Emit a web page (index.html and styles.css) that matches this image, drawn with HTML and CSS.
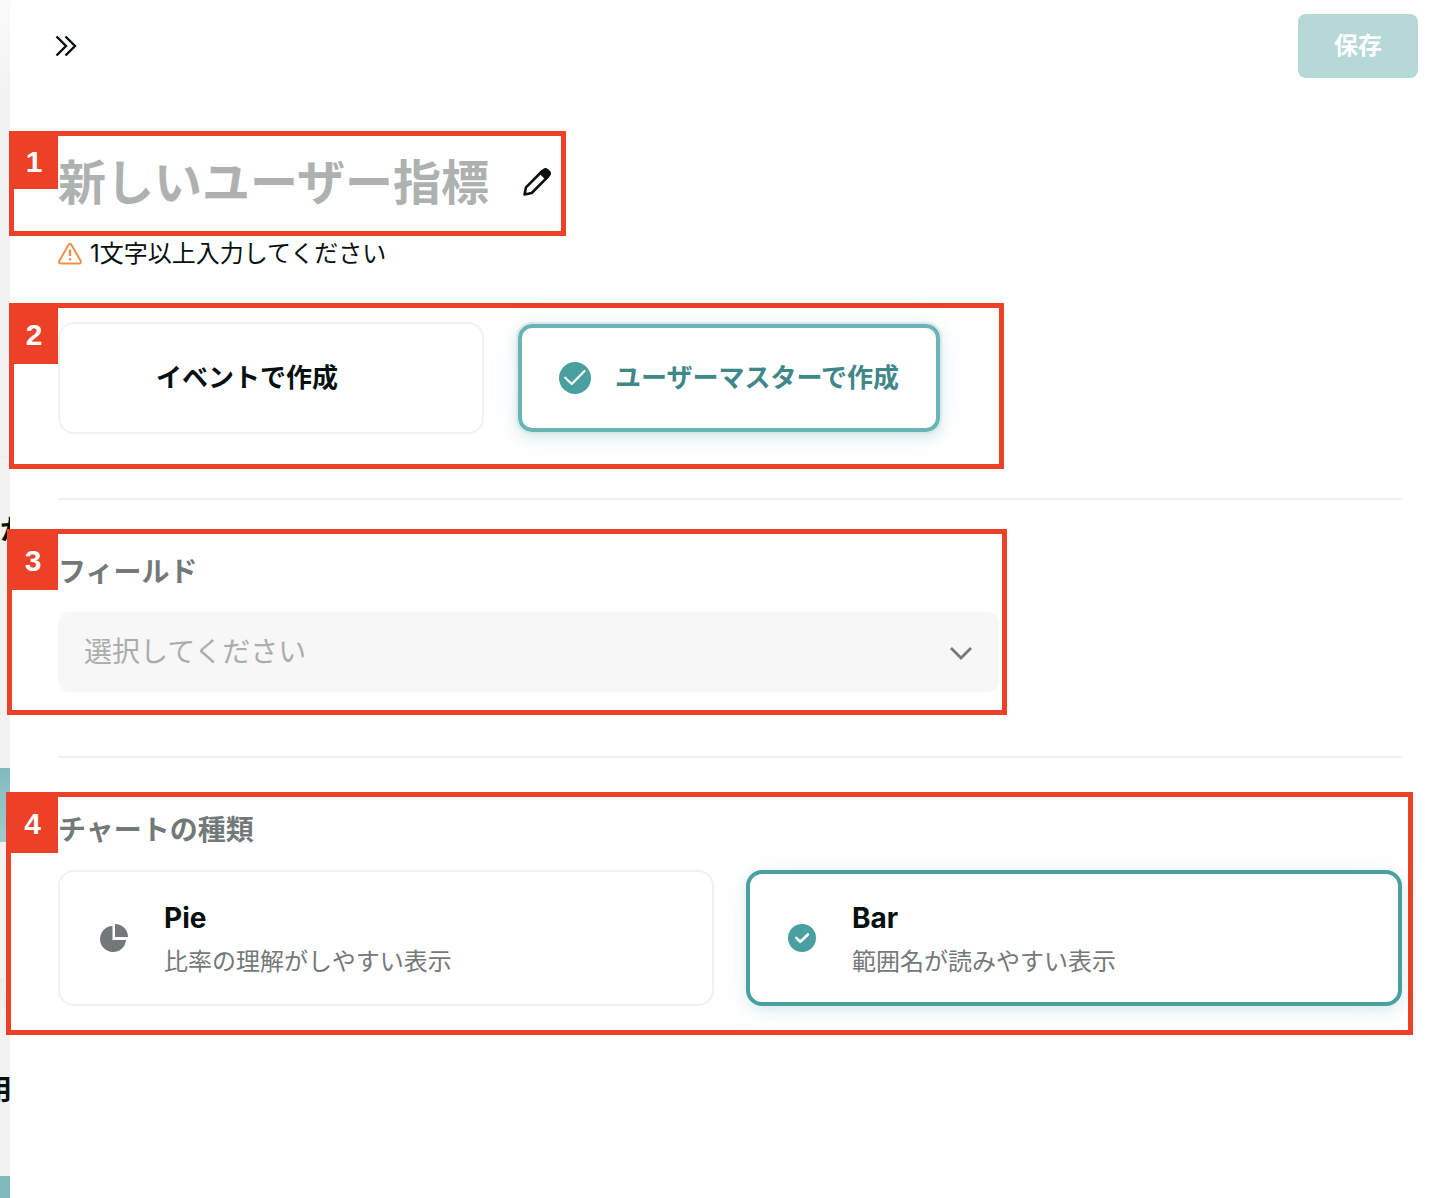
FILE: index.html
```html
<!DOCTYPE html>
<html lang="ja">
<head>
<meta charset="utf-8">
<meta name="viewport" content="width=device-width, initial-scale=1">
<title>新しいユーザー指標</title>
<link rel="stylesheet" href="styles.css">
</head>
<body>
<div class="page">
  <aside class="backdrop" aria-hidden="true">
    <div class="backdrop-top"></div>
    <div class="backdrop-heading">か</div>
    <div class="backdrop-chart"></div>
    <div class="backdrop-gap"></div>
    <div class="backdrop-band"></div>
    <div class="backdrop-heading backdrop-heading-end">用</div>
    <div class="backdrop-chart backdrop-chart-last"></div>
  </aside>

  <main class="drawer">
    <header class="drawer-header">
      <button class="icon-button" type="button" aria-label="閉じる">
        <svg width="24" height="24" viewBox="0 0 24 24" fill="none" stroke="currentColor" stroke-width="2.400"><path d="M2.500 2.500 12 12l-9.500 9.500M11.500 2.500 21 12l-9.500 9.500"/></svg>
      </button>
      <button class="save-button" type="button" disabled>保存</button>
    </header>

    <form class="drawer-body">
      <div class="annotated title-row">
        <input class="title-input" type="text" aria-label="指標名" placeholder="新しいユーザー指標">
        <button class="icon-button" type="button" aria-label="名前を編集">
          <svg width="28" height="28" viewBox="0 0 28 28"><path d="M1.500 26.500 3 19.300 18.800 3.500l5.700 5.700L8.700 25Z" fill="none" stroke="currentColor" stroke-width="2.600" stroke-linejoin="round"/><path d="m15.800 5 4-3.800a4 4 0 0 1 5.400 0l1.600 1.600a4 4 0 0 1 0 5.400L23 12.200Z" fill="currentColor"/></svg>
        </button>
        <div class="note note-title"><span class="note-number">1</span></div>
      </div>

      <p class="warning">
        <svg width="24" height="24" viewBox="0 0 24 24" fill="none" stroke="currentColor" stroke-width="2" stroke-linejoin="round"><path d="M10.700 2.500a1.500 1.500 0 0 1 2.600 0l9.400 16.600a1.500 1.500 0 0 1-1.300 2.300H2.600a1.500 1.500 0 0 1-1.300-2.300Z"/><path d="M12 7.500v6.500M12 16.200v2.400" stroke-width="2.400"/></svg>
        <span>1文字以上入力してください</span>
      </p>

      <div class="annotated method-group" role="radiogroup" aria-label="作成方法">
        <label class="card method">
          <input class="card-radio" type="radio" name="method" value="event">
          <span class="method-text">イベントで作成</span>
        </label>
        <label class="card method method-selected">
          <input class="card-radio" type="radio" name="method" value="master" checked>
          <svg width="32" height="32" viewBox="0 0 32 32"><circle cx="16" cy="16" r="16" fill="#4a9fa1"/><path d="m6.200 15.700 6.600 6.300L25.500 9" fill="none" stroke="#fff" stroke-width="2.200" stroke-linecap="round" stroke-linejoin="round"/></svg>
          <span>ユーザーマスターで作成</span>
        </label>
        <div class="note note-method"><span class="note-number">2</span></div>
      </div>

      <hr class="divider">

      <div class="annotated field">
        <label class="section-label" for="field">フィールド</label>
        <div class="select-box">
          <select class="select" id="field">
            <option>選択してください</option>
          </select>
          <svg class="select-arrow" width="24" height="24" viewBox="0 0 24 24" fill="none" stroke="currentColor" stroke-width="2.800"><path d="m2 8 10 10L22 8"/></svg>
        </div>
        <div class="note note-field"><span class="note-number">3</span></div>
      </div>

      <hr class="divider">

      <div class="annotated" role="radiogroup" aria-labelledby="chart-label">
        <div class="section-label" id="chart-label">チャートの種類</div>
        <div class="chart-group">
          <label class="card chart">
            <input class="card-radio" type="radio" name="chart" value="pie">
            <svg width="28" height="28" viewBox="0 0 28 28" fill="#737978"><path d="M12.500 2A13 13 0 1 0 26 16H12.500Z"/><path d="M15 0a13 13 0 0 1 13 13H15Z"/></svg>
            <span class="chart-text"><strong class="chart-name">Pie</strong><span class="chart-note">比率の理解がしやすい表示</span></span>
          </label>
          <label class="card chart chart-selected">
            <input class="card-radio" type="radio" name="chart" value="bar" checked>
            <svg width="28" height="28" viewBox="0 0 28 28"><circle cx="14" cy="14" r="14" fill="#4a9fa1"/><path d="m8.300 13.900 4 3.900 7.600-7.300" fill="none" stroke="#fff" stroke-width="2.600" stroke-linecap="round" stroke-linejoin="round"/></svg>
            <span class="chart-text"><strong class="chart-name">Bar</strong><span class="chart-note">範囲名が読みやすい表示</span></span>
          </label>
        </div>
        <div class="note note-chart"><span class="note-number">4</span></div>
      </div>
    </form>
  </main>
</div>
</body>
</html>
```

FILE: styles.css
```css
:root {
  --ink: #05100f;
  --muted: #737978;
  --faint: #adb2b0;
  --line: #f1f1f1;
  --teal: #4a9fa1;
  --mark: #ec4027;
}

* {
  box-sizing: border-box;
}

body {
  margin: 0;
  color: var(--ink);
  background: #fff;
  font-family: Inter, "Noto Sans CJK JP", sans-serif;
  font-size: 24px;
  line-height: 36px;
}

button,
input,
select {
  font: inherit;
}

svg {
  display: block;
  flex: none;
}

.page {
  display: grid;
  grid-template-columns: 10px minmax(0, 1fr);
  min-height: 100vh;
}

/* Sliver of the page behind the drawer */
.backdrop {
  display: flex;
  flex-direction: column;
  overflow: hidden;
  background: linear-gradient(#fafafa, #f2f2f2 100px);
}

.backdrop-top {
  height: 458px;
  border-bottom: 2px solid #efefef;
}

.backdrop-heading {
  height: 310px;
  padding-top: 54px;
  font-size: 28px;
  font-weight: 700;
}

.backdrop-chart {
  height: 74px;
  background: linear-gradient(#82bbbd, #a0cbcc);
}

.backdrop-gap {
  height: 136px;
}

.backdrop-band {
  height: 40px;
  background: linear-gradient(#ebebeb, #f2f2f2);
}

.backdrop-heading-end {
  display: flex;
  justify-content: flex-end;
  height: 158px;
  margin-right: -2px;
}

.backdrop-chart-last {
  flex: 1;
  background: #82b9bb;
}

.drawer {
  background: #fff;
}

.drawer-header {
  display: flex;
  align-items: center;
  justify-content: space-between;
  padding: 14px 24px 14px 44px;
}

.icon-button {
  padding: 0;
  border: 0;
  color: inherit;
  background: none;
}

.save-button {
  width: 120px;
  height: 64px;
  border: 0;
  border-radius: 8px;
  color: #fff;
  background: #b6d8d9;
  font-weight: 700;
}

.drawer-body {
  padding: 54px 40px 40px 48px;
}

.annotated {
  position: relative;
}

.title-row {
  display: flex;
  align-items: center;
  gap: 33px;
  width: fit-content;
  height: 72px;
}

.title-input {
  width: 432px;
  height: 72px;
  padding: 0;
  border: 0;
  color: var(--ink);
  background: none;
  font-size: 48px;
  font-weight: 700;
}

.title-input::placeholder {
  color: var(--faint);
  opacity: 1;
}

.warning {
  display: flex;
  align-items: center;
  gap: 8px;
  margin: 18px 0 50px;
}

.warning svg {
  color: #f0914a;
}

.card {
  position: relative;
  display: flex;
  align-items: center;
  border: 2px solid var(--line);
  border-radius: 16px;
  background: #fff;
}

.card-radio {
  position: absolute;
  inset: 0;
  width: 100%;
  height: 100%;
  margin: 0;
  opacity: 0;
}

.method-group {
  display: grid;
  grid-template-columns: 1fr 1fr;
  gap: 32px;
  max-width: 884px;
}

.method {
  justify-content: center;
  gap: 24px;
  height: 112px;
  font-size: 26px;
  font-weight: 700;
}

.method-text {
  padding-right: 48px;
}

.method-selected {
  border-color: #dae8e8;
  color: #3f8889;
  box-shadow: inset 0 0 0 4px #69b4b5, 0 4px 12px rgba(74, 159, 161, 0.16), 0 4px 32px rgba(74, 159, 161, 0.08);
}

.divider {
  height: 2px;
  margin: 64px 0 52px;
  border: 0;
  background: var(--line);
}

.section-label {
  display: block;
  margin-bottom: 20px;
  color: var(--muted);
  font-size: 28px;
  font-weight: 700;
  line-height: 40px;
}

.field {
  max-width: 941px;
}

.select-box {
  display: grid;
  align-items: center;
}

.select {
  grid-area: 1 / 1;
  width: 100%;
  height: 80px;
  padding: 0 64px 0 26px;
  border: 0;
  border-radius: 12px;
  appearance: none;
  color: #a9aeac;
  background: #f7f7f7;
  font-size: 28px;
}

.select-arrow {
  grid-area: 1 / 1;
  justify-self: end;
  margin-right: 26px;
  color: var(--muted);
  pointer-events: none;
}

.chart-group {
  display: grid;
  grid-template-columns: 1fr 1fr;
  gap: 32px;
}

.chart {
  gap: 36px;
  height: 136px;
  padding: 0 40px;
}

.chart-selected {
  padding: 0 38px;
  border: 4px solid var(--teal);
  box-shadow: 0 4px 12px rgba(74, 159, 161, 0.16), 0 4px 32px rgba(74, 159, 161, 0.08);
}

.chart-text {
  display: flex;
  flex-direction: column;
  gap: 8px;
  padding-top: 3px;
}

.chart-name {
  font-size: 28px;
}

.chart-note {
  color: var(--muted);
}

/* Numbered callouts laid over the form */
.note {
  position: absolute;
  border: 5px solid var(--mark);
  pointer-events: none;
}

.note-number {
  display: flex;
  align-items: center;
  justify-content: center;
  width: 44px;
  height: 56px;
  padding: 0 4px 2px 0;
  color: #fff;
  background: var(--mark);
  font-family: "Liberation Sans", sans-serif;
  font-size: 30px;
  font-weight: 700;
}

.note-title {
  inset: -15px -15px -18px -49px;
}

.note-title .note-number {
  height: 53px;
}

.note-method {
  inset: -19px -62px -35px -49px;
}

.note-field {
  inset: -23px -8px -23px -51px;
}

.note-field .note-number {
  width: 46px;
}

.note-chart {
  inset: -18px -11px -29px -52px;
}

.note-chart .note-number {
  width: 47px;
}
```
